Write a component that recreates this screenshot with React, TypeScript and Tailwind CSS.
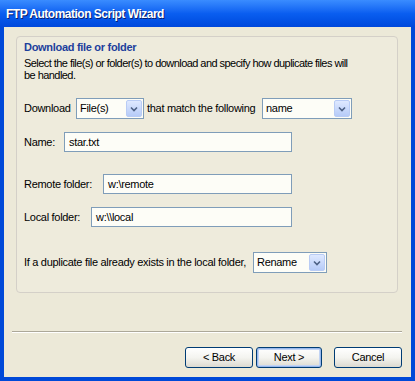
import React from 'react';

const font = { fontFamily: '"Liberation Sans", Arial, sans-serif' };

function Combo({ value, width }: { value: string; width: string }) {
  return (
    <div className={`flex h-[21px] ${width} shrink-0 items-center border border-[#7f9db9] bg-[#fdfdf7] pl-[3px] pr-[1px]`}>
      <span className="flex-1 text-[11px] leading-none text-black">{value}</span>
      <span className="flex h-[17px] w-[16px] items-center justify-center rounded-[2px] border border-[#b9ccf5] bg-gradient-to-b from-[#dfe9ff] to-[#b6cbf8]">
        <svg width="8" height="6" viewBox="0 0 8 6">
          <path d="M1 1.5 L4 4.5 L7 1.5" fill="none" stroke="#4d6185" strokeWidth="1.6" />
        </svg>
      </span>
    </div>
  );
}

function TextBox({ value, width }: { value: string; width: string }) {
  return (
    <div className={`flex h-[20px] ${width} shrink-0 items-center border border-[#7f9db9] bg-[#fdfdf7] pl-[4px] text-[11px] text-black`}>
      {value}
    </div>
  );
}

function XpButton({ label, focused }: { label: string; focused?: boolean }) {
  return (
    <div
      className={`flex h-[21px] items-center justify-center rounded-[3px] border border-[#003c74] bg-gradient-to-b from-white via-[#f4f4f0] to-[#dcdad0] text-[11px] text-black ${
        focused ? 'shadow-[inset_0_0_0_1px_#98b8ec,inset_0_0_0_2px_#c2d4f4]' : ''
      } ${label === 'Next >' ? 'w-[66px]' : 'w-[68px]'}`}
    >
      {label}
    </div>
  );
}

export default function App() {
  return (
    <div className="flex h-[381px] w-[415px] flex-col bg-[#0049d8] tracking-[-0.3px]" style={font}>
      {/* title bar */}
      <div className="flex h-[27px] items-center bg-gradient-to-b from-[#3a8cff] via-[#0a5ef0] to-[#0048dc] pl-[6px]">
        <span className="text-[12px] font-bold tracking-[-0.5px] text-white [text-shadow:1px_1px_0_#0a1f6e]">
          FTP Automation Script Wizard
        </span>
      </div>

      <div className="mx-[4px] mb-[4px] flex flex-1 flex-col bg-[#ece9d8]">
        {/* group panel */}
        <div className="ml-[12px] mr-[13px] mt-[9px] flex h-[257px] flex-col whitespace-nowrap rounded-[4px] border border-[#d4d0c8] bg-[#eeebdc] px-[7px] pt-[4px] text-[11px] text-black">
          <div className="text-[11px] font-bold leading-[13px] text-[#1d3f9c]">Download file or folder</div>
          <div className="mt-[3px] leading-[12px] tracking-[-0.55px]">
            Select the file(s) or folder(s) to download and specify how duplicate files will
            <br />
            be handled.
          </div>

          <div className="mt-[17px] flex items-center">
            <span className="w-[52px]">Download</span>
            <Combo value="File(s)" width="w-[68px]" />
            <span className="ml-[3px] w-[115px]">that match the following</span>
            <Combo value="name" width="w-[90px]" />
          </div>

          <div className="mt-[13px] flex items-center">
            <span className="w-[40px]">Name:</span>
            <TextBox value="star.txt" width="w-[228px]" />
          </div>

          <div className="mt-[22px] flex items-center">
            <span className="w-[79px]">Remote folder:</span>
            <TextBox value="w:\remote" width="w-[189px]" />
          </div>

          <div className="mt-[13px] flex items-center">
            <span className="w-[67px]">Local folder:</span>
            <TextBox value="w:\\local" width="w-[201px]" />
          </div>

          <div className="mt-[25px] flex items-center">
            <span className="w-[229px]">If a duplicate file already exists in the local folder,</span>
            <Combo value="Rename" width="w-[74px]" />
          </div>
        </div>

        {/* separator */}
        <div className="ml-[8px] mr-[9px] mt-[38px] border-t border-b border-t-[#aca899] border-b-white" />

        {/* buttons */}
        <div className="mr-[9px] mt-[14px] flex justify-end">
          <XpButton label="< Back" />
          <div className="ml-[3px]">
            <XpButton label="Next >" focused />
          </div>
          <div className="ml-[12px]">
            <XpButton label="Cancel" />
          </div>
        </div>
      </div>
    </div>
  );
}
